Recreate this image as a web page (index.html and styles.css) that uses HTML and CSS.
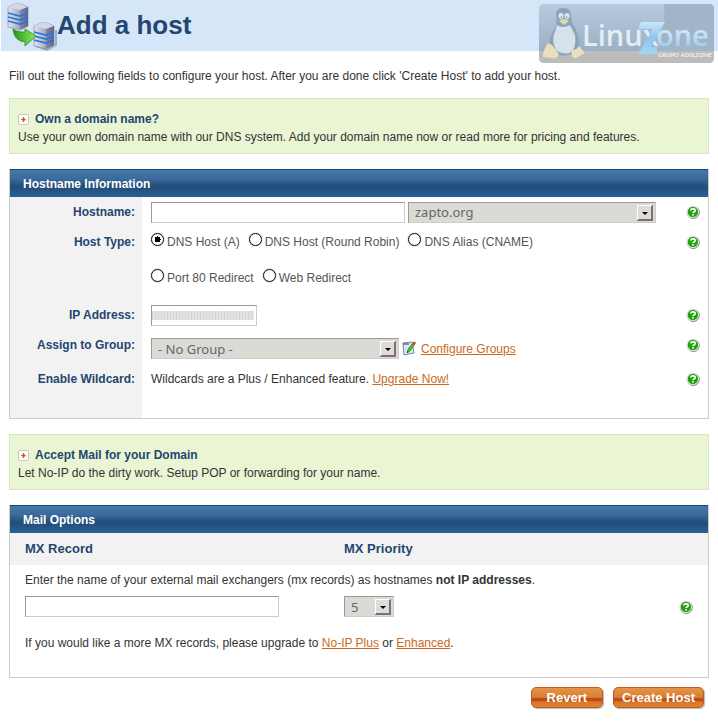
FILE: index.html
```
<!DOCTYPE html>
<html lang="en">
<head>
<meta charset="utf-8">
<title>Add a host</title>
<link rel="stylesheet" href="styles.css">
</head>
<body>
<svg class="defs" aria-hidden="true">
  <defs>
    <linearGradient id="server" x1="0" x2="1"><stop offset="0" stop-color="#e3e5ef"/><stop offset=".4" stop-color="#b9bfd2"/><stop offset="1" stop-color="#686987"/></linearGradient>
    <linearGradient id="arrow" x1="0" x2="1"><stop offset="0" stop-color="#25941e"/><stop offset="1" stop-color="#8aef5c"/></linearGradient>
    <linearGradient id="plate" x1="0" y1="0" x2="0" y2="1"><stop offset="0" stop-color="#b7cbdf"/><stop offset="1" stop-color="#93a9bf"/></linearGradient>
    <linearGradient id="zed" x1="0" y1="0" x2="0" y2="1"><stop offset="0" stop-color="#c9e6fa"/><stop offset=".5" stop-color="#8ac6ef"/><stop offset="1" stop-color="#a6d6f5"/></linearGradient>
    <linearGradient id="one" x1="0" y1="0" x2="0" y2="1"><stop offset=".3" stop-color="#dcecf7"/><stop offset=".8" stop-color="#9fd0f0"/></linearGradient>
    <symbol id="help" viewBox="0 0 14 14">
      <circle cx="7.3" cy="7.4" r="6.5" fill="#8d8d8d"/>
      <circle cx="6.8" cy="6.7" r="6.3" fill="#e4e2e4"/>
      <circle cx="6.9" cy="6.9" r="5.2" fill="#21a30c"/>
      <path d="M4.7 5.5Q4.9 3.9 7 3.9Q9.2 3.9 9.2 5.5Q9.2 6.5 8 7Q7 7.4 7 8.1M7 9v1.5" fill="none" stroke="#fff" stroke-width="1.7"/>
    </symbol>
    <symbol id="go" viewBox="0 0 11 11">
      <rect x=".5" y=".5" width="10" height="10" rx="1" fill="#fff" stroke="#c9c5c9"/>
      <path d="M3 5h2V3l3 2.5L5 8V6H3z" fill="#d5641c"/><path d="M5 3v5" stroke="#a84a16" stroke-width=".7"/>
    </symbol>
    <symbol id="drop" viewBox="0 0 16 16">
      <path d="M0 0h16v16H0z" fill="#806c79"/><path d="M0 0h15v15H0z" fill="#fff"/><path d="M1 1h14v14H1z" fill="#806c79"/><path d="M1 1h13v13H1z" fill="#dddcd7"/>
      <path d="M5 7h6L8 10z" fill="#000"/>
    </symbol>
    <g id="tower">
      <path d="M1 3L8 0H14L21 3V22L13 26L1 23z" fill="url(#server)" stroke="#77809b" stroke-width=".6"/>
      <path d="M1 3L8 0H14L21 3L13 6z" fill="#d4d8e6"/>
      <path d="M13 6L21 3V22L13 26z" fill="#5f6080" opacity=".4"/>
      <path d="M1 9L13 12L21 9M1 13L13 16L21 13M1 17L13 20L21 17" fill="none" stroke="#2b76d1" stroke-width="1.7"/>
    </g>
  </defs>
</svg>
<header class="banner">
  <svg class="banner-icon" viewBox="0 0 50 50" width="50" height="50" aria-hidden="true">
    <path d="M29 45L40 49L49 44V29" fill="none" stroke="#9ab0ca" stroke-width="2"/>
    <use href="#tower" x="0" y="3"/>
    <use href="#tower" x="26" y="22"/>
    <path d="M6 28Q10 31 14 31H18V28L29 35L18 45V41Q7 40 6 28z" fill="url(#arrow)" stroke="#278e1d" stroke-width=".8"/>
  </svg>
  <h1>Add a host</h1>
  <svg class="logo" viewBox="0 0 175 59" width="175" height="59" role="img" aria-label="LinuxZone">
    <rect width="175" height="59" rx="5" fill="url(#plate)"/>
    <path d="M125 0H170Q175 0 175 5V47H112Q128 22 125 0z" fill="#a1b5c8"/>
    <path d="M0 47H175V54Q175 59 170 59H5Q0 59 0 54z" fill="#bcbcbd"/>
    <path d="M17 11Q17 3 25 4Q32 4 32 12Q32 18 37 26Q42 36 38 47Q30 53 20 51L11 45Q9 34 15 26Q19 20 17 11z" fill="#8da3ba"/>
    <path d="M18 21Q24 25 31 21L36 31Q38 43 31 49Q23 51 17 46Q12 36 16 28z" fill="#d6e1ea"/>
    <ellipse cx="22" cy="12" rx="2.5" ry="3" fill="#dfe7e9"/><ellipse cx="28" cy="12" rx="2.5" ry="3" fill="#dfe7e9"/>
    <circle cx="22.5" cy="13" r=".8" fill="#71869b"/><circle cx="27.5" cy="13" r=".8" fill="#71869b"/>
    <path d="M20 17Q25 13 30 17L25 21z" fill="#d6dcae"/>
    <path d="M9 39L13 41L20 50Q18 55 13 54L4 53Q4 46 9 39zM33 45Q37 47 40 42L46 49Q40 52 37 54Q31 55 33 45z" fill="#eadfbd"/>
    <text class="logo-name" x="43" y="42" fill="#e5edf4">Linux</text>
    <path d="M102 18H126L112 43H118V50H99L114 25H99z" fill="url(#zed)"/>
    <text class="logo-name" x="117" y="42" fill="url(#one)">one</text>
    <text class="logo-group" x="119" y="53" fill="#eef0f2">GRUPO ADSLZONE</text>
  </svg>
</header>
<main>
  <p class="intro">Fill out the following fields to configure your host. After you are done click 'Create Host' to add your host.</p>
  <section class="notice">
    <h2><svg class="go" aria-hidden="true"><use href="#go"/></svg>Own a domain name?</h2>
    <p>Use your own domain name with our DNS system. Add your domain name now or read more for pricing and features.</p>
  </section>
  <form>
    <section class="panel">
      <h2 class="bar">Hostname Information</h2>
      <div class="fields">
        <div class="row">
          <label class="name" for="hostname">Hostname:</label>
          <div class="value joined">
            <input class="text wide" id="hostname" type="text">
            <span class="pick wide"><select aria-label="Domain"><option>zapto.org</option></select><svg aria-hidden="true"><use href="#drop"/></svg></span>
          </div>
          <svg class="help" role="img" aria-label="Help"><use href="#help"/></svg>
        </div>
        <div class="row types" role="radiogroup" aria-labelledby="type">
          <span class="name" id="type">Host Type:</span>
          <div class="value choices">
            <div class="line">
              <label><input type="radio" name="type" checked><span>DNS Host (A)</span></label>
              <label><input type="radio" name="type"><span>DNS Host (Round Robin)</span></label>
              <label><input type="radio" name="type"><span>DNS Alias (CNAME)</span></label>
            </div>
            <div class="line">
              <label><input type="radio" name="type"><span>Port 80 Redirect</span></label>
              <label><input type="radio" name="type"><span>Web Redirect</span></label>
            </div>
          </div>
          <svg class="help" role="img" aria-label="Help"><use href="#help"/></svg>
        </div>
        <div class="row">
          <label class="name" for="ip">IP Address:</label>
          <div class="value"><input class="text masked" id="ip" type="text"></div>
          <svg class="help" role="img" aria-label="Help"><use href="#help"/></svg>
        </div>
        <div class="row group">
          <label class="name" for="group">Assign to Group:</label>
          <div class="value">
            <span class="pick wide"><select id="group"><option>- No Group -</option></select><svg aria-hidden="true"><use href="#drop"/></svg></span>
            <svg class="edit" viewBox="0 0 14 15" aria-hidden="true">
              <path d="M1 2L10 1L12 12L2 14z" fill="#dce8f4" stroke="#6f8dab"/><path d="M1 2l1 2 1-2 1 2 1-2 1 2 1-2" fill="none" stroke="#52667b" stroke-width=".8"/>
              <path d="M5 12L6 8L10 3L12 5L8 10z" fill="#48bf29" stroke="#23811d" stroke-width=".6"/><path d="M10 3L11 1Q13 0 14 2L12 5z" fill="#d04b28"/><path d="M5 12l.5-2 1 1z" fill="#222"/>
            </svg>
            <a href="#">Configure Groups</a>
          </div>
          <svg class="help" role="img" aria-label="Help"><use href="#help"/></svg>
        </div>
        <div class="row">
          <span class="name">Enable Wildcard:</span>
          <p class="value">Wildcards are a Plus / Enhanced feature.&nbsp;<a href="#">Upgrade Now!</a></p>
          <svg class="help" role="img" aria-label="Help"><use href="#help"/></svg>
        </div>
      </div>
    </section>
    <section class="notice">
      <h2><svg class="go" aria-hidden="true"><use href="#go"/></svg>Accept Mail for your Domain</h2>
      <p>Let No-IP do the dirty work. Setup POP or forwarding for your name.</p>
    </section>
    <section class="panel mail">
      <h2 class="bar">Mail Options</h2>
      <div class="mail-row heads"><label for="mx">MX Record</label><label for="priority">MX Priority</label></div>
      <p class="note">Enter the name of your external mail exchangers (mx records) as hostnames <b>not IP addresses</b>.</p>
      <div class="mail-row">
        <div><input class="text wide" id="mx" type="text"></div>
        <div><span class="pick small"><select id="priority"><option>5</option></select><svg aria-hidden="true"><use href="#drop"/></svg></span></div>
        <svg class="help" role="img" aria-label="Help"><use href="#help"/></svg>
      </div>
      <p class="note more">If you would like a more MX records, please upgrade to <a href="#">No-IP Plus</a> or <a href="#">Enhanced</a>.</p>
    </section>
    <div class="actions">
      <button type="reset">Revert</button>
      <button type="submit">Create Host</button>
    </div>
  </form>
</main>
</body>
</html>
```
FILE: styles.css
```
* { box-sizing: border-box; }
body {
  margin: 0;
  background: #fff;
  color: #333;
  font: 12px/18px "Liberation Sans", Arial, sans-serif;
}
h1, h2, p { margin: 0; font-size: inherit; }
a { color: #c96a1b; }
.defs { position: absolute; width: 0; height: 0; }

.banner {
  position: relative;
  display: flex;
  align-items: center;
  height: 51px;
  margin-left: 1px;
  padding-left: 6px;
  background: #d4e6f7;
}
.banner-icon { flex: none; }
.banner h1 { color: #24466f; font-size: 26px; line-height: 48px; padding-bottom: 2px; }
.logo { position: absolute; top: 4px; right: 4px; }
.logo-name { font: 600 29px "Open Sans", sans-serif; }
.logo-group { font: bold 6px Lato, sans-serif; }

main { padding: 16px 9px; }
.intro { margin-bottom: 13px; }
.notice {
  min-height: 56px;
  padding: 11px 8px 7px;
  border: 1px solid #d6e6c1;
  background: #e9f5d3;
}
.notice h2 { display: flex; align-items: center; gap: 6px; color: #24466f; }
.go { width: 11px; height: 11px; }

.panel { margin: 15px 0; border: 1px solid #ccc; border-top: 0; }
.bar {
  height: 28px;
  padding-left: 13px;
  border-top: 1px solid #1d4268;
  background: linear-gradient(#447aab, #39699a 35%, #244c75 60%, #265788 80%, #295e98);
  color: #fff;
  line-height: 28px;
}
.fields {
  padding-bottom: 24px;
  background: linear-gradient(to right, #f2f2f2 132px, #fff 132px);
}
.row {
  display: grid;
  grid-template-columns: 125px 1fr 14px;
  column-gap: 16px;
  padding-right: 8px;
  min-height: 30px;
  align-items: center;
}
.name { color: #24466f; font-weight: bold; text-align: right; line-height: 30px; }
.value { display: flex; align-items: center; }
.joined { gap: 3px; }
.help { width: 14px; height: 14px; }
.types, .group { align-items: start; }
.types .help, .group .help { margin-top: 8px; }
.types { min-height: 73px; color: #555; }
.choices { flex-direction: column; align-items: flex-start; gap: 6px; }
.line { display: flex; gap: 9px; line-height: 30px; }
.line label { display: flex; align-items: center; gap: 3px; }
.line input {
  appearance: none;
  width: 13px;
  height: 13px;
  margin: 0 0 5px;
  border: 1px solid #111;
  border-radius: 50%;
  box-shadow: 0 0 1px #111;
}
.line input:checked { background: radial-gradient(circle, #000 3px, #fff 3px); }
.group { min-height: 34px; }
.group .value { padding-top: 8px; }
.edit { width: 14px; height: 15px; margin: 0 5px 0 3px; }

.text, .pick select {
  display: block;
  height: 21px;
  margin: 0;
  border: 1px solid #ccc;
  border-top-color: #999;
  border-left-color: #999;
  border-radius: 0;
  background: #fff;
  font: 13px "Noto Sans", sans-serif;
}
.text.wide { width: 254px; }
.pick { position: relative; display: block; }
.pick.wide { width: 248px; }
.pick.small { width: 50px; }
.pick select { width: 100%; padding: 0 24px 0 6px; appearance: none; background: #dbdad5; color: #666; }
.pick svg { position: absolute; top: 3px; right: 3px; width: 16px; height: 16px; pointer-events: none; }
.masked {
  width: 106px;
  background: repeating-linear-gradient(to right, #d3d7db 0 1px, #e2e3e5 1px 3px) left center / 102px 9px no-repeat;
}

.mail-row {
  display: grid;
  grid-template-columns: 303px 1fr 14px;
  column-gap: 16px;
  padding: 0 15px;
  align-items: center;
}
.heads { background: #f2f2f2; color: #24466f; font-size: 13px; font-weight: bold; line-height: 32px; }
.note { padding: 6px 15px 7px; }
.more { padding: 17px 15px 25px; }
.actions { display: flex; justify-content: flex-end; gap: 10px; margin-top: -6px; padding-right: 5px; }
button {
  height: 21px;
  padding: 0 8px;
  border: 1px solid #bd5a20;
  border-radius: 5px;
  background: linear-gradient(#e39449, #d97d31 50%, #bf4a16 52%, #bf4a16 68%, #d87727 72%, #df8430);
  box-shadow: 1px 1px 1px #bbb;
  color: #fff;
  font: bold 13px/18px "Liberation Sans", Arial, sans-serif;
}
button:first-child { padding: 0 15px; }
```
